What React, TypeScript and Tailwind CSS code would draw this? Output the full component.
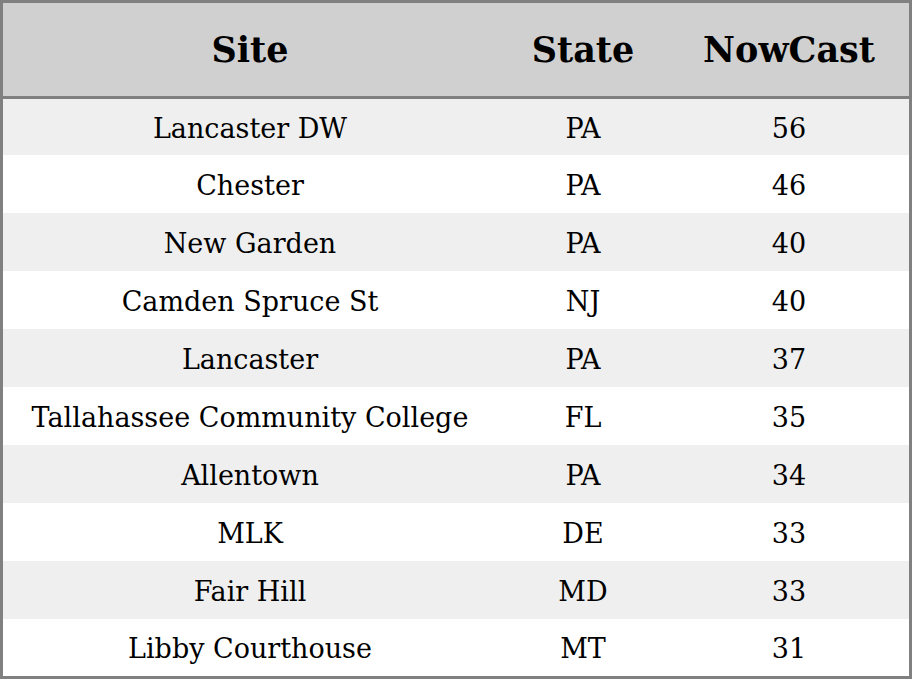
const rows: [string, string, string][] = [
  ["Lancaster DW", "PA", "56"],
  ["Chester", "PA", "46"],
  ["New Garden", "PA", "40"],
  ["Camden Spruce St", "NJ", "40"],
  ["Lancaster", "PA", "37"],
  ["Tallahassee Community College", "FL", "35"],
  ["Allentown", "PA", "34"],
  ["MLK", "DE", "33"],
  ["Fair Hill", "MD", "33"],
  ["Libby Courthouse", "MT", "31"],
];

export default function App() {
  return (
    <div className="w-[912px] h-[679px] overflow-hidden bg-white font-['DejaVu_Serif',serif] text-black">
      <div className="border-[3px] border-[#808080]">
        <div className="grid grid-cols-[494px_172px_240px] h-[96px] pt-[2px] items-center bg-[#d0d0d0] border-b-[3px] border-[#808080] text-[35px] font-bold text-center">
          <div>Site</div>
          <div>State</div>
          <div>NowCast</div>
        </div>
        {rows.map(([site, state, now], i) => (
          <div
            key={site}
            className={`grid grid-cols-[494px_172px_240px] pt-1 items-center text-center text-[27px] ${
              i === 0 ? "h-[56px]" : i === rows.length - 1 ? "h-[57px]" : "h-[58px]"
            } ${i % 2 === 0 ? "bg-[#efefef]" : "bg-white"}`}
          >
            <div>{site}</div>
            <div>{state}</div>
            <div>{now}</div>
          </div>
        ))}
      </div>
    </div>
  );
}
